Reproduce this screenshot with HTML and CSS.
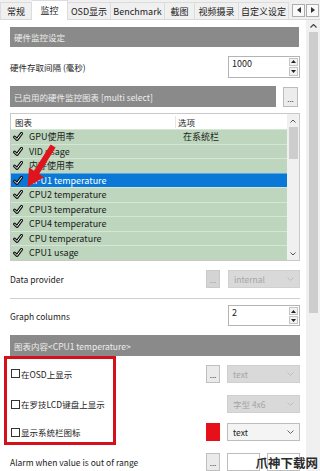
FILE: index.html
```html
<!DOCTYPE html>
<html>
<head>
<meta charset="utf-8">
<link rel="stylesheet" href="styles.css">
</head>
<body>
<div class="window">
  <div class="tabs">
    <div class="tab t1">常规</div>
    <div class="tab t2 active">监控</div>
    <div class="tab t3">OSD显示</div>
    <div class="tab t4">Benchmark</div>
    <div class="tab t5">截图</div>
    <div class="tab t6">视频摄录</div>
    <div class="tab t7">自定义设定</div>
    <div class="tab-arrows">
      <span class="tarr"><svg width="4" height="6" viewBox="0 0 4 6"><path d="M4 0 L0 3 L4 6 Z" fill="#333"/></svg></span>
      <span class="tarr"><svg width="4" height="6" viewBox="0 0 4 6"><path d="M0 0 L4 3 L0 6 Z" fill="#333"/></svg></span>
    </div>
  </div>
  <div class="main">
    <div class="content">
      <div class="section s1">硬件监控设定</div>
      <div class="row r-interval">
        <span class="label">硬件存取间隔 (毫秒)</span>
        <div class="spin">
          <span class="spin-val">1000</span>
          <span class="spin-btns">
            <span class="sb"><svg width="5" height="3" viewBox="0 0 5 3"><path d="M0 3 L2.5 0 L5 3 Z" fill="#222"/></svg></span>
            <span class="sb"><svg width="5" height="3" viewBox="0 0 5 3"><path d="M0 0 L2.5 3 L5 0 Z" fill="#222"/></svg></span>
          </span>
        </div>
      </div>
      <div class="row r-charts">
        <div class="section s2">已启用的硬件监控图表 [multi select]</div>
        <div class="btn btn-more">...</div>
      </div>
      <div class="list">
        <div class="list-body">
          <div class="list-head"><span class="col1">图表</span><span class="col2">选项</span></div>
          <div class="item"><svg class="chk" width="10" height="9" viewBox="0 0 10 9"><path d="M1.5 5 L4 7.5 L8.5 1.5" fill="none" stroke="#111" stroke-width="3" stroke-linecap="round" stroke-linejoin="round"/><path d="M1.5 5 L4 7.5 L8.5 1.5" fill="none" stroke="#fff" stroke-width="1" stroke-linecap="round" stroke-linejoin="round"/></svg><span class="c1">GPU使用率</span><span class="c2">在系统栏</span></div>
          <div class="item"><svg class="chk" width="10" height="9" viewBox="0 0 10 9"><path d="M1.5 5 L4 7.5 L8.5 1.5" fill="none" stroke="#111" stroke-width="3" stroke-linecap="round" stroke-linejoin="round"/><path d="M1.5 5 L4 7.5 L8.5 1.5" fill="none" stroke="#fff" stroke-width="1" stroke-linecap="round" stroke-linejoin="round"/></svg><span class="c1">VID usage</span><span class="c2"></span></div>
          <div class="item"><svg class="chk" width="10" height="9" viewBox="0 0 10 9"><path d="M1.5 5 L4 7.5 L8.5 1.5" fill="none" stroke="#111" stroke-width="3" stroke-linecap="round" stroke-linejoin="round"/><path d="M1.5 5 L4 7.5 L8.5 1.5" fill="none" stroke="#fff" stroke-width="1" stroke-linecap="round" stroke-linejoin="round"/></svg><span class="c1">内存使用率</span><span class="c2"></span></div>
          <div class="item sel"><svg class="chk" width="10" height="9" viewBox="0 0 10 9"><path d="M1.5 5 L4 7.5 L8.5 1.5" fill="none" stroke="#111" stroke-width="3" stroke-linecap="round" stroke-linejoin="round"/><path d="M1.5 5 L4 7.5 L8.5 1.5" fill="none" stroke="#fff" stroke-width="1" stroke-linecap="round" stroke-linejoin="round"/></svg><span class="c1">CPU1 temperature</span><span class="c2"></span></div>
          <div class="item"><svg class="chk" width="10" height="9" viewBox="0 0 10 9"><path d="M1.5 5 L4 7.5 L8.5 1.5" fill="none" stroke="#111" stroke-width="3" stroke-linecap="round" stroke-linejoin="round"/><path d="M1.5 5 L4 7.5 L8.5 1.5" fill="none" stroke="#fff" stroke-width="1" stroke-linecap="round" stroke-linejoin="round"/></svg><span class="c1">CPU2 temperature</span><span class="c2"></span></div>
          <div class="item"><svg class="chk" width="10" height="9" viewBox="0 0 10 9"><path d="M1.5 5 L4 7.5 L8.5 1.5" fill="none" stroke="#111" stroke-width="3" stroke-linecap="round" stroke-linejoin="round"/><path d="M1.5 5 L4 7.5 L8.5 1.5" fill="none" stroke="#fff" stroke-width="1" stroke-linecap="round" stroke-linejoin="round"/></svg><span class="c1">CPU3 temperature</span><span class="c2"></span></div>
          <div class="item"><svg class="chk" width="10" height="9" viewBox="0 0 10 9"><path d="M1.5 5 L4 7.5 L8.5 1.5" fill="none" stroke="#111" stroke-width="3" stroke-linecap="round" stroke-linejoin="round"/><path d="M1.5 5 L4 7.5 L8.5 1.5" fill="none" stroke="#fff" stroke-width="1" stroke-linecap="round" stroke-linejoin="round"/></svg><span class="c1">CPU4 temperature</span><span class="c2"></span></div>
          <div class="item"><svg class="chk" width="10" height="9" viewBox="0 0 10 9"><path d="M1.5 5 L4 7.5 L8.5 1.5" fill="none" stroke="#111" stroke-width="3" stroke-linecap="round" stroke-linejoin="round"/><path d="M1.5 5 L4 7.5 L8.5 1.5" fill="none" stroke="#fff" stroke-width="1" stroke-linecap="round" stroke-linejoin="round"/></svg><span class="c1">CPU temperature</span><span class="c2"></span></div>
          <div class="item"><svg class="chk" width="10" height="9" viewBox="0 0 10 9"><path d="M1.5 5 L4 7.5 L8.5 1.5" fill="none" stroke="#111" stroke-width="3" stroke-linecap="round" stroke-linejoin="round"/><path d="M1.5 5 L4 7.5 L8.5 1.5" fill="none" stroke="#fff" stroke-width="1" stroke-linecap="round" stroke-linejoin="round"/></svg><span class="c1">CPU1 usage</span><span class="c2"></span></div>
        </div>
        <div class="list-scroll">
          <span class="ls-arrow"><svg width="6" height="4" viewBox="0 0 6 4"><path d="M0.5 3.5 L3 1 L5.5 3.5" fill="none" stroke="#555" stroke-width="1"/></svg></span>
          <span class="ls-thumb"></span>
          <span class="ls-fill"></span>
          <span class="ls-arrow"><svg width="6" height="4" viewBox="0 0 6 4"><path d="M0.5 0.5 L3 3 L5.5 0.5" fill="none" stroke="#555" stroke-width="1"/></svg></span>
        </div>
      </div>
      <div class="row r-provider">
        <span class="label">Data provider</span>
        <div class="ctrls">
          <div class="btn btn-dis">...</div>
          <div class="combo dis wide"><span>internal</span><svg width="7" height="4" viewBox="0 0 7 4"><path d="M0.5 0.5 L3.5 3.5 L6.5 0.5" fill="none" stroke="#bdbdbd" stroke-width="1"/></svg></div>
        </div>
      </div>
      <div class="sep"></div>
      <div class="row r-cols">
        <span class="label">Graph columns</span>
        <div class="spin spin-sm">
          <span class="spin-val">2</span>
          <span class="spin-btns">
            <span class="sb"><svg width="5" height="3" viewBox="0 0 5 3"><path d="M0 3 L2.5 0 L5 3 Z" fill="#222"/></svg></span>
            <span class="sb"><svg width="5" height="3" viewBox="0 0 5 3"><path d="M0 0 L2.5 3 L5 0 Z" fill="#222"/></svg></span>
          </span>
        </div>
      </div>
      <div class="section s3">图表内容&lt;CPU1 temperature&gt;</div>
      <div class="row r-osd">
        <span class="label"><span class="cb"></span>在OSD上显示</span>
        <div class="ctrls">
          <div class="btn btn-light">...</div>
          <div class="combo dis"><span>text</span><svg width="7" height="4" viewBox="0 0 7 4"><path d="M0.5 0.5 L3.5 3.5 L6.5 0.5" fill="none" stroke="#bdbdbd" stroke-width="1"/></svg></div>
        </div>
      </div>
      <div class="row r-lcd">
        <span class="label"><span class="cb"></span>在罗技LCD键盘上显示</span>
        <div class="ctrls">
          <div class="combo dis"><span>字型 4x6</span><svg width="7" height="4" viewBox="0 0 7 4"><path d="M0.5 0.5 L3.5 3.5 L6.5 0.5" fill="none" stroke="#bdbdbd" stroke-width="1"/></svg></div>
        </div>
      </div>
      <div class="row r-tray">
        <span class="label"><span class="cb"></span>显示系统栏图标</span>
        <div class="ctrls">
          <div class="swatch"></div>
          <div class="combo"><span>text</span><svg width="7" height="4" viewBox="0 0 7 4"><path d="M0.5 0.5 L3.5 3.5 L6.5 0.5" fill="none" stroke="#666" stroke-width="1"/></svg></div>
        </div>
      </div>
      <div class="row r-alarm">
        <span class="label">Alarm when value is out of range</span>
        <div class="ctrls">
          <div class="btn btn-light">...</div>
          <div class="inp"></div>
          <div class="inp"></div>
        </div>
      </div>
    </div>
    <div class="vscroll">
      <span class="vs-arrow"><svg width="7" height="4" viewBox="0 0 7 4"><path d="M0.5 3.5 L3.5 0.5 L6.5 3.5" fill="none" stroke="#444" stroke-width="1.2"/></svg></span>
      <span class="vs-thumb"></span>
    </div>
  </div>
  <div class="annot"></div>
  <svg class="red-arrow" width="320" height="471" viewBox="0 0 320 471">
    <polygon points="55.6,147.6 39.1,174 44,177.2 27.5,187 29,167.6 34,170.8 50.6,144.4" fill="#e0141c"/>
  </svg>
  <div class="watermark">爪神下载网</div>
</div>
</body>
</html>
```
FILE: styles.css
```css
html, body {
  margin: 0;
  padding: 0;
  background: #fff;
}

.window {
  position: relative;
  width: 320px;
  height: 471px;
  overflow: hidden;
  background: #fff;
  font-family: "Noto Sans CJK SC", "Noto Sans", sans-serif;
  font-size: 8.5px;
  color: #1c1c1c;
}

/* Tabs */
.tabs {
  display: flex;
  align-items: flex-end;
  height: 20px;
  background: #f0f0f0;
  border-bottom: 1px solid #d9d9d9;
  box-sizing: border-box;
}

.tab {
  height: 17px;
  display: flex;
  align-items: center;
  justify-content: center;
  box-sizing: border-box;
  border-top: 1px solid #dcdcdc;
  border-right: 1px solid #dcdcdc;
  font-size: 9px;
  color: #222;
  white-space: nowrap;
}

.t1 { width: 32px; border-left: 1px solid #dcdcdc; }
.t2 { width: 36px; }
.t3 { width: 43px; }
.t4 { width: 54px; }
.t5 { width: 30px; }
.t6 { width: 44px; }
.t7 { width: 50px; }

.tab.active {
  height: 20px;
  margin-bottom: -1px;
  background: #fff;
  position: relative;
}

.tab-arrows {
  margin-left: auto;
  align-self: center;
  display: flex;
  gap: 1px;
  padding-right: 1px;
  margin-top: 1px;
}

.tarr {
  width: 13px;
  height: 13px;
  box-sizing: border-box;
  border: 1px solid #adadad;
  background: #f9f9f9;
  display: flex;
  align-items: center;
  justify-content: center;
}

/* Main area */
.main {
  display: flex;
  height: 451px;
}

.content {
  width: 306px;
  box-sizing: border-box;
  padding: 0 6px 0 10px;
  display: flex;
  flex-direction: column;
}

.vscroll {
  width: 14px;
  background: #f0f0f0;
  display: flex;
  flex-direction: column;
  align-items: center;
}

.vs-arrow {
  height: 12px;
  display: flex;
  align-items: center;
  justify-content: center;
}

.vs-thumb {
  width: 9px;
  height: 281px;
  background: #cdcdcd;
}

/* Sections */
.section {
  height: 20px;
  background: #8a8a8a;
  color: #ededed;
  padding-left: 4px;
  display: flex;
  align-items: center;
  box-sizing: border-box;
  white-space: nowrap;
}

.s1 {
  margin-top: 7px;
  margin-right: 1px;
}

.s2 {
  width: 266px;
  height: 21px;
}

.s3 {
  margin-top: 9px;
  height: 21px;
}

/* Rows */
.row {
  display: flex;
  align-items: center;
}

.label {
  flex: 1;
  display: flex;
  align-items: center;
  white-space: nowrap;
}

.r-interval { margin-top: 8px; height: 23px; }
.r-charts { margin-top: 8px; height: 21px; }
.r-provider { margin-top: 7px; height: 22px; }
.r-cols { margin-top: 6px; height: 21px; }
.r-osd { margin-top: 8px; height: 19px; }
.r-lcd { margin-top: 12px; height: 18px; }
.r-tray { margin-top: 10px; height: 18px; }
.r-alarm { margin-top: 12px; height: 18px; }

.spin {
  width: 72px;
  height: 22px;
  border: 1px solid #b4b4b4;
  box-sizing: border-box;
  display: flex;
  background: #fff;
}

.spin-sm { height: 21px; }

.spin-val {
  flex: 1;
  padding: 1px 0 0 3px;
  font-size: 9px;
  line-height: 12px;
}

.spin-btns {
  width: 10px;
  display: flex;
  flex-direction: column;
  gap: 1px;
  padding: 1px 1px 1px 0;
  box-sizing: border-box;
}

.sb {
  flex: 1;
  border: 1px solid #c4c4c4;
  background: #f2f2f2;
  display: flex;
  align-items: center;
  justify-content: center;
}

.btn {
  width: 14px;
  height: 18px;
  box-sizing: border-box;
  display: flex;
  align-items: flex-end;
  justify-content: center;
  padding-bottom: 3px;
  font-size: 8px;
  line-height: 8px;
}

.btn-more {
  width: 15px;
  height: 20px;
  margin-left: 7px;
  border: 1px solid #bcbcbc;
  background: #ececec;
  color: #333;
  align-self: center;
}

.btn-dis {
  background: #d4d4d4;
  border: 1px solid #c9c9c9;
  color: #9c9c9c;
}

.btn-light {
  background: #eaeaea;
  border: 1px solid #bfbfbf;
  color: #333;
}

/* List */
.list {
  margin-top: 6px;
  height: 148px;
  border: 1px solid #c9c9c9;
  box-sizing: border-box;
  display: flex;
}

.list-body {
  flex: 1;
  min-width: 0;
}

.list-head {
  height: 15px;
  display: flex;
  align-items: center;
  background: #fff;
}

.col1 {
  width: 160px;
  padding-left: 4px;
  border-right: 1px solid #e6e6e6;
}

.col2 {
  padding-left: 2px;
}

.item {
  height: 14.5px;
  display: flex;
  align-items: center;
  background: #bdd6bd;
  border-top: 1px solid #d6e6d6;
  box-sizing: border-box;
  font-size: 9px;
  white-space: nowrap;
}

.item.sel {
  background: #0a78d7;
  border-top-color: #5aa6e6;
  color: #fff;
}

.chk {
  margin-left: 2px;
  flex: none;
}

.c1 {
  width: 146px;
  margin-left: 6px;
}

.c2 {
  padding-left: 8px;
}

.list-scroll {
  width: 12px;
  background: #f0f0f0;
  display: flex;
  flex-direction: column;
  align-items: center;
}

.ls-arrow {
  height: 13px;
  display: flex;
  align-items: center;
  justify-content: center;
}

.ls-thumb {
  width: 9px;
  height: 32px;
  background: #cdcdcd;
}

.ls-fill {
  flex: 1;
}

/* Controls */
.ctrls {
  display: flex;
  align-items: center;
  gap: 7px;
}

.combo {
  width: 73px;
  height: 18px;
  box-sizing: border-box;
  border: 1px solid #bdbdbd;
  background: #f4f4f4;
  display: flex;
  align-items: center;
  justify-content: space-between;
  padding: 0 5px 0 5px;
  color: #222;
}

.combo.dis {
  background: #d9d9d9;
  border-color: #d0d0d0;
  color: #a6a6a6;
}

.combo.wide {
  width: 72px;
  margin-left: 1px;
}

.sep {
  margin-top: 8px;
  height: 1px;
  background: #cfcfcf;
}

.cb {
  width: 9px;
  height: 9px;
  box-sizing: border-box;
  border: 1px solid #333;
  background: #fff;
  margin-left: 1px;
  margin-right: 1px;
}

.swatch {
  width: 14px;
  height: 18px;
  background: #e5101a;
}

.inp {
  width: 33px;
  height: 18px;
  box-sizing: border-box;
  border: 1px solid #bdbdbd;
  background: #fff;
}

/* Overlays */
.annot {
  position: absolute;
  left: 4px;
  top: 356px;
  width: 112px;
  height: 89px;
  box-sizing: border-box;
  border: 3px solid #d4111b;
}

.red-arrow {
  position: absolute;
  left: 0;
  top: 0;
  pointer-events: none;
}

.watermark {
  position: absolute;
  right: 2px;
  bottom: -1px;
  font-size: 12.5px;
  font-weight: bold;
  color: #2b2b2b;
  letter-spacing: 0;
  text-shadow: 0 0 2px #fff;
}
```
